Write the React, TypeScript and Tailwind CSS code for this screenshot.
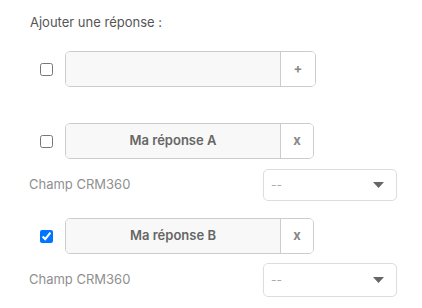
import React from 'react'

function Box({ label, btn, btnW, checked }: { label?: string; btn: string; btnW: string; checked?: boolean }) {
  return (
    <div className="flex items-center ml-[10px]">
      <input
        type="checkbox"
        defaultChecked={checked}
        className="w-[13px] h-[13px] m-0 shrink-0 accent-[#0075ff]"
      />
      <div className="flex ml-[12px] h-[36px] border border-[#cccccc] rounded-[5px] overflow-hidden">
        <div className="w-[214px] bg-[#f8f8f8] flex items-center justify-center text-[13px] font-semibold text-[#666666]">
          {label}
        </div>
        <div
          className={`${btnW} border-l border-[#cccccc] bg-white flex items-center justify-center text-[13px] font-bold text-[#888888]`}>
          {btn}
        </div>
      </div>
    </div>
  )
}

function CrmRow({ mt, h }: { mt: string; h: string }) {
  return (
    <div className={`flex items-center ${mt}`}>
      <span className="w-[234px] -ml-[1px] text-[13px] text-[#8f8f8f]">Champ CRM360</span>
      <div className={`w-[134px] ${h} border border-[#dddddd] rounded-[5px] flex items-center justify-between pl-[7px] pr-[12px]`}>
        <span className="text-[12px] text-[#aaaaaa]">--</span>
        <svg width="11" height="6" viewBox="0 0 11 6">
          <path d="M0 0 L11 0 L5.5 6 Z" fill="#666666" />
        </svg>
      </div>
    </div>
  )
}

export default function App() {
  return (
    <div className="w-[422px] h-[308px] bg-white pl-[30px] pt-[14px] font-['Inter','Liberation_Sans',sans-serif]">
      <h3 className="text-[13px] leading-[16px] text-[#555555]">Ajouter une réponse :</h3>
      <div className="mt-[21px]">
        <Box btn="+" btnW="w-[35px]" />
      </div>
      <div className="mt-[36px]">
        <Box label="Ma réponse A" btn="x" btnW="w-[33px]" />
      </div>
      <CrmRow mt="mt-[10px]" h="h-[32px]" />
      <div className="mt-[17px]">
        <Box label="Ma réponse B" btn="x" btnW="w-[33px]" checked />
      </div>
      <CrmRow mt="mt-[9px]" h="h-[34px]" />
    </div>
  )
}
